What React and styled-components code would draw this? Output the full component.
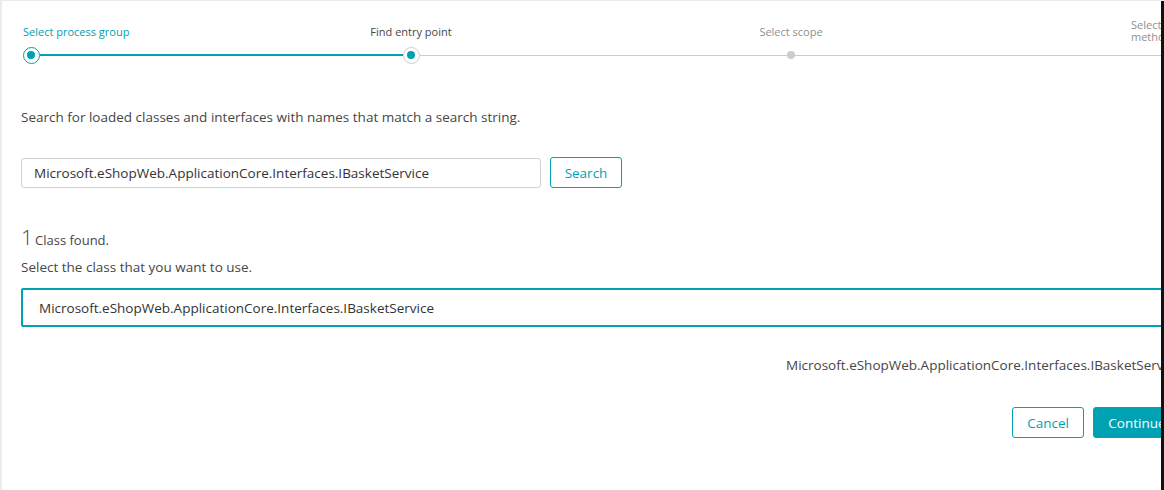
import React from "react";
import styled, { createGlobalStyle, css } from "styled-components";

const teal = "#00a1b2";
const text = "#454646";
const muted = "#8f8f8f";
const line = "#cccccc";

const GlobalStyle = createGlobalStyle`
  html, body {
    margin: 0;
    padding: 0;
    background: #ffffff;
    overflow: hidden;
  }
  body {
    font-family: "Open Sans", Lato, "Liberation Sans", sans-serif;
    color: ${text};
  }
`;

const Frame = styled.div`
  position: relative;
  width: 1164px;
  height: 490px;
  box-sizing: border-box;
  border-top: 1px solid #ebebeb;
  border-left: 2px solid #ebebeb;
  padding-left: 19px;
  overflow: hidden;
  background: #ffffff;
`;

const EdgeBar = styled.div`
  position: absolute;
  top: 0;
  right: 0;
  width: 3px;
  height: 100%;
  background: #111111;
`;

const EdgeMark = styled.div`
  position: absolute;
  left: -2px;
  top: 455px;
  width: 2px;
  height: 3px;
  background: ${teal};
`;

const Content = styled.div`
  width: 1160px;
  display: flex;
  flex-direction: column;
`;

const Stepper = styled.ol`
  list-style: none;
  margin: 21px 0 0 -180px;
  padding: 0;
  display: grid;
  grid-template-columns: repeat(4, 380px);
`;

const Step = styled.li`
  display: flex;
  flex-direction: column;
  gap: 7px;
`;

const StepLabel = styled.span`
  height: 18px;
  font-size: 11px;
  line-height: 16px;
  display: flex;
  align-items: flex-end;
  color: ${(p) => (p.$state === "done" ? teal : p.$state === "current" ? text : muted)};
  justify-content: ${(p) => (p.$offset !== undefined ? "flex-start" : "center")};
  padding-left: ${(p) => p.$offset || 0}px;
  ${(p) =>
    p.$wrap &&
    css`
      width: ${p.$wrap}px;
      line-height: 12px;
      align-items: flex-start;
      margin-top: -3px;
      height: 21px;
    `}
`;

const Track = styled.div`
  display: flex;
  align-items: center;
  height: 16px;
`;

const Segment = styled.div`
  flex: 1;
  height: ${(p) => (p.$active ? 2 : 1)}px;
  background: ${(p) => (p.$hidden ? "transparent" : p.$active ? teal : line)};
`;

const Dot = styled.div`
  box-sizing: border-box;
  border-radius: 50%;
  display: flex;
  align-items: center;
  justify-content: center;
  ${(p) =>
    p.$state === "upcoming"
      ? css`
          width: 8px;
          height: 8px;
          background: ${line};
        `
      : css`
          width: 17px;
          height: 17px;
          border: 1.5px solid ${p.$state === "done" ? teal : line};
          background: #ffffff;
          &::after {
            content: "";
            width: 8px;
            height: 8px;
            border-radius: 50%;
            background: ${teal};
          }
        `}
`;

const Paragraph = styled.p`
  margin: ${(p) => p.$top || 0}px 0 0;
  font-size: 13.5px;
  line-height: 18px;
  color: ${text};
  text-align: ${(p) => (p.$right ? "right" : "left")};
  white-space: nowrap;
`;

const SearchRow = styled.div`
  margin-top: 31px;
  display: flex;
  align-items: center;
  gap: 9px;
`;

const SearchInput = styled.div`
  width: 520px;
  height: 30px;
  box-sizing: border-box;
  border: 1px solid #d2d2d2;
  border-radius: 3px;
  padding: 0 12px;
  display: flex;
  align-items: center;
  font-size: 13.5px;
  color: #333333;
`;

const Button = styled.button`
  height: 31px;
  box-sizing: border-box;
  border-radius: 3px;
  border: 1px solid ${teal};
  background: ${(p) => (p.$primary ? teal : "#ffffff")};
  color: ${(p) => (p.$primary ? "#ffffff" : teal)};
  font-family: inherit;
  font-size: 13.5px;
  padding: 0;
  width: ${(p) => p.$width}px;
  cursor: pointer;
`;

const ResultCount = styled.div`
  margin-top: 37px;
  display: flex;
  align-items: baseline;
  gap: 2px;
  line-height: 24px;
`;

const BigNumber = styled.span`
  font-size: 21px;
  font-weight: 300;
  color: ${text};
`;

const Small = styled.span`
  font-size: 13px;
  color: ${text};
`;

const ClassOption = styled.div`
  margin-top: 12px;
  height: 39px;
  box-sizing: border-box;
  border: 2px solid ${teal};
  border-radius: 2px;
  padding: 0 16px;
  display: flex;
  align-items: center;
  font-size: 13.5px;
  color: #333333;
`;

const Actions = styled.div`
  margin-top: 33px;
  display: flex;
  justify-content: flex-end;
  gap: 9px;
`;

const steps = [
  { label: "Select process group", state: "done", left: "hidden", right: "active", offset: 182 },
  { label: "Find entry point", state: "current", left: "active", right: "idle" },
  { label: "Select scope", state: "upcoming", left: "idle", right: "idle" },
  { label: "Select method", state: "upcoming", left: "idle", right: "hidden", offset: 150, wrap: 50 },
];

const className = "Microsoft.eShopWeb.ApplicationCore.Interfaces.IBasketService";

export default function App() {
  return (
    <>
      <GlobalStyle />
      <Frame>
        <Content>
          <Stepper>
            {steps.map((s) => (
              <Step key={s.label}>
                <StepLabel $state={s.state} $offset={s.offset} $wrap={s.wrap}>
                  {s.label}
                </StepLabel>
                <Track>
                  <Segment $hidden={s.left === "hidden"} $active={s.left === "active"} />
                  <Dot $state={s.state} />
                  <Segment $hidden={s.right === "hidden"} $active={s.right === "active"} />
                </Track>
              </Step>
            ))}
          </Stepper>

          <Paragraph $top={45}>
            Search for loaded classes and interfaces with names that match a search string.
          </Paragraph>

          <SearchRow>
            <SearchInput>{className}</SearchInput>
            <Button $width={72}>Search</Button>
          </SearchRow>

          <ResultCount>
            <BigNumber>1</BigNumber>
            <Small>Class found.</Small>
          </ResultCount>

          <Paragraph $top={6}>Select the class that you want to use.</Paragraph>

          <ClassOption>{className}</ClassOption>

          <Paragraph $top={29} $right>
            {className}
          </Paragraph>

          <Actions>
            <Button $width={72}>Cancel</Button>
            <Button $width={88} $primary>
              Continue
            </Button>
          </Actions>
        </Content>
        <EdgeMark />
        <EdgeBar />
      </Frame>
    </>
  );
}
